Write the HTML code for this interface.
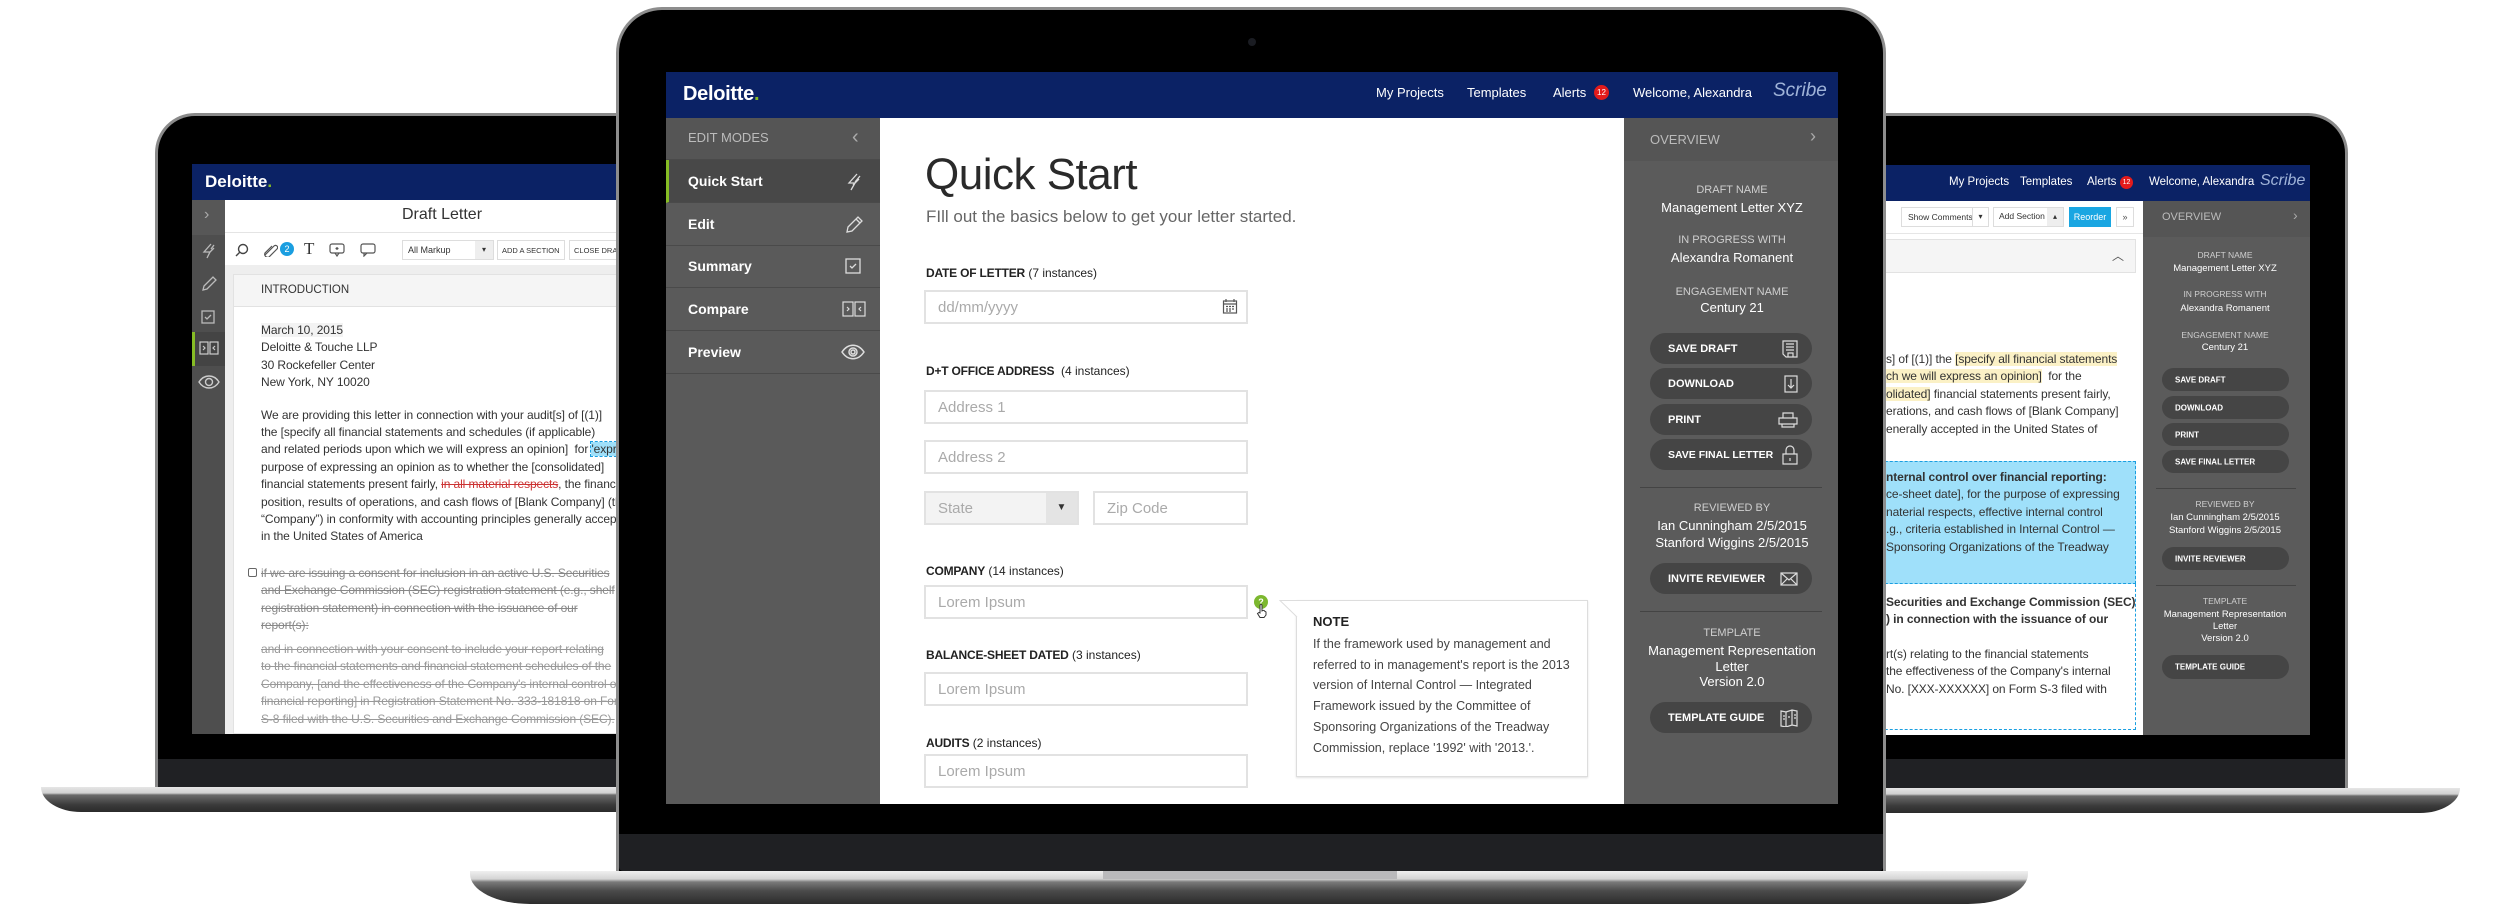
<!DOCTYPE html>
<html><head><meta charset="utf-8"><style>
*{margin:0;padding:0;box-sizing:border-box}
body{width:2500px;height:915px;background:#fff;position:relative;overflow:hidden;font-family:"Liberation Sans",sans-serif}
.a{position:absolute}
.navy{background:#0b2265}
.t{position:absolute;white-space:nowrap}
.lbl{font-size:11px;color:#cfcfcf;text-transform:uppercase;text-align:center;width:200px}
.val{font-size:13px;color:#fff;text-align:center;width:200px}
.btn{position:absolute;background:#454545;border-radius:16px;color:#fff;font-size:11px;font-weight:bold}
.btn span{position:absolute;left:18px;top:50%;transform:translateY(-50%)}
.btn svg{position:absolute;right:14px;top:50%;transform:translateY(-50%)}
.inp{position:absolute;border:2px solid #e2e2e2;background:#fff;font-size:15px;color:#aaa;padding-left:12px;display:flex;align-items:center}
.flab{position:absolute;font-size:12px;color:#222;white-space:nowrap}
.flab b{letter-spacing:-.2px}
.srow{position:absolute;left:666px;width:214px;height:43px;border-bottom:1px solid #4a4a4a;color:#fff;font-size:14px;font-weight:bold}
.srow span{position:absolute;left:22px;top:13px}
.srow svg{position:absolute;left:178px;top:12px}
.dl{font-size:12px;color:#333;line-height:17.4px;letter-spacing:-.1px}
</style></head><body>

<!-- LEFT LAPTOP -->
<div class="a" style="left:155px;top:113px;width:700px;height:674px;background:#000;border:3px solid #8a8a8a;border-bottom:none;border-radius:40px 40px 0 0"></div>
<div class="a" style="left:158px;top:759px;width:700px;height:28px;background:#202124"></div>
<div class="a" style="left:41px;top:787px;width:700px;height:25px;border-radius:0 0 0 40px/0 0 0 25px;background:linear-gradient(#e6e6e6 0,#d0d0d0 6px,#6a6a6a 8px,#3a3a3a 18px,#2a2a2a 25px)"></div>
<div class="a" style="left:192px;top:164px;width:500px;height:570px;background:#fff;overflow:hidden">
  <div class="a navy" style="left:0;top:0;width:500px;height:36px"></div>
  <div class="t" style="left:13px;top:8px;color:#fff;font-size:17px;font-weight:bold">Deloitte<span style="color:#86bc25">.</span></div>
  <div class="a" style="left:0;top:36px;width:33px;height:534px;background:#4e4e4e"></div>
  <div class="a" style="left:0;top:36px;width:33px;height:35px;background:#575757"></div>
  <div class="t" style="left:12px;top:42px;color:#aaa;font-size:16px">›</div>
  <svg class="a" style="left:8px;top:78px" width="18" height="18" viewBox="0 0 18 18" fill="none" stroke="#bbb" stroke-width="1.3"><path d="M11 2L4 10h6l-3 6M14 3l-3 4M9 11l5-5"/></svg>
  <svg class="a" style="left:8px;top:111px" width="18" height="18" viewBox="0 0 18 18" fill="none" stroke="#bbb" stroke-width="1.3"><path d="M3 15l1-4 9-9 3 3-9 9z"/></svg>
  <svg class="a" style="left:8px;top:145px" width="16" height="16" viewBox="0 0 16 16" fill="none" stroke="#bbb" stroke-width="1.3"><rect x="2" y="2" width="12" height="12"/><path d="M5 8l2 2 4-4"/></svg>
  <div class="a" style="left:0;top:168px;width:33px;height:34px;background:#444;border-left:3px solid #86bc25"></div>
  <svg class="a" style="left:7px;top:177px" width="20" height="14" viewBox="0 0 20 14" fill="none" stroke="#ccc" stroke-width="1.2"><rect x="1" y="1" width="8" height="12"/><rect x="11" y="1" width="8" height="12"/><path d="M4 5l2 2-2 2M16 5l-2 2 2 2"/></svg>
  <svg class="a" style="left:6px;top:211px" width="22" height="14" viewBox="0 0 22 14" fill="none" stroke="#ccc" stroke-width="1.4"><path d="M1 7c5-8 15-8 20 0-5 8-15 8-20 0z"/><circle cx="11" cy="7" r="3.5"/></svg>
  <div class="t" style="left:210px;top:42px;font-size:16px;color:#333">Draft Letter</div>
  <div class="a" style="left:33px;top:68px;width:470px;height:1px;background:#e4e4e4"></div>
  <svg class="a" style="left:43px;top:79px" width="14" height="14" viewBox="0 0 14 14" fill="none" stroke="#444" stroke-width="1.4"><circle cx="8" cy="6" r="4.5"/><path d="M5 9l-4 4"/></svg>
  <svg class="a" style="left:70px;top:79px" width="16" height="14" viewBox="0 0 16 14" fill="none" stroke="#555" stroke-width="1.2"><path d="M3 12l9-9a2 2 0 013 3l-8 8a3 3 0 01-4-4l7-7"/></svg>
  <div class="a" style="left:88px;top:78px;width:14px;height:14px;border-radius:7px;background:#1a9ee0;color:#fff;font-size:9px;text-align:center;line-height:14px">2</div>
  <div class="t" style="left:112px;top:75px;font-size:17px;color:#333;font-family:'Liberation Serif',serif">T</div>
  <svg class="a" style="left:137px;top:79px" width="16" height="14" viewBox="0 0 16 14" fill="none" stroke="#555" stroke-width="1.2"><rect x="1" y="1" width="14" height="9" rx="2"/><path d="M6 10l2 3 2-3M8 4v3M6.5 5.5h3"/></svg>
  <svg class="a" style="left:168px;top:79px" width="16" height="14" viewBox="0 0 16 14" fill="none" stroke="#555" stroke-width="1.2"><rect x="1" y="1" width="14" height="9" rx="2"/><path d="M4 10v3l3-3"/></svg>
  <div class="a" style="left:210px;top:76px;width:92px;height:20px;border:1px solid #ddd;font-size:9px;color:#333;padding:4px 0 0 5px">All Markup<span style="position:absolute;right:0;top:0;width:18px;height:18px;background:#eee;font-size:8px;text-align:center;line-height:18px">▾</span></div>
  <div class="a" style="left:305px;top:76px;width:68px;height:20px;border:1px solid #ddd;font-size:7.5px;color:#333;padding:5px 0 0 4px;white-space:nowrap">ADD A SECTION</div>
  <div class="a" style="left:377px;top:76px;width:68px;height:20px;border:1px solid #ddd;font-size:7.5px;color:#333;padding:5px 0 0 4px;white-space:nowrap">CLOSE DRAFT</div>
  <div class="a" style="left:33px;top:101px;width:470px;height:470px;background:#eee"></div>
  <div class="a" style="left:41px;top:110px;width:460px;height:460px;background:#fff;border:1px solid #e2e2e2"></div>
  <div class="a" style="left:41px;top:110px;width:460px;height:33px;background:#f5f5f5;border:1px solid #e2e2e2"></div>
  <div class="t" style="left:69px;top:120px;font-size:11.5px;color:#333">INTRODUCTION</div>
  <div class="a dl" style="left:69px;top:158px;white-space:nowrap">
    <span style="background:#f3f3f3">March 10, 2015</span><br>Deloitte &amp; Touche LLP<br>30 Rockefeller Center<br>New York, NY 10020<br><div style="height:15px"></div>
    We are providing this letter in connection with your audit[s] of [(1)]<br>the [specify all financial statements and schedules (if applicable)<br>and related periods upon which we will express an opinion]&nbsp; for <span style="background:#9fe0fa;outline:1px dashed #1a9ee0">'express</span><br>purpose of expressing an opinion as to whether the [consolidated]<br>financial statements present fairly, <s style="color:#c33">in all material respects</s>, the financial<br>position, results of operations, and cash flows of [Blank Company] (the<br>“Company”) in conformity with accounting principles generally accepted<br>in the United States of America
  </div>
  <div class="a" style="left:56px;top:404px;width:9px;height:9px;border:1px solid #666;border-radius:2px"></div>
  <div class="a dl" style="left:69px;top:401px;white-space:nowrap;color:#888"><s>if we are issuing a consent for inclusion in an active U.S. Securities</s><br><s>and Exchange Commission (SEC) registration statement (e.g., shelf</s><br><s>registration statement) in connection with the issuance of our</s><br><s>report(s):</s></div>
  <div class="a dl" style="left:69px;top:477px;white-space:nowrap;color:#999"><s>and in connection with your consent to include your report relating</s><br><s>to the financial statements and financial statement schedules of the</s><br><s>Company, [and the effectiveness of the Company's internal control over</s><br><s>financial reporting] in Registration Statement No. 333-181818 on Form</s><br><s>S-8 filed with the U.S. Securities and Exchange Commission (SEC).</s></div>
</div>

<!-- RIGHT LAPTOP -->
<div class="a" style="left:1700px;top:113px;width:648px;height:675px;background:#000;border:3px solid #8a8a8a;border-bottom:none;border-radius:40px 40px 0 0"></div>
<div class="a" style="left:1700px;top:759px;width:645px;height:29px;background:#202124"></div>
<div class="a" style="left:1800px;top:788px;width:660px;height:25px;border-radius:0 0 40px 0/0 0 25px 0;background:linear-gradient(#e6e6e6 0,#d0d0d0 6px,#6a6a6a 8px,#3a3a3a 18px,#2a2a2a 25px)"></div>
<div class="a" style="left:1760px;top:165px;width:550px;height:570px;background:#fff;overflow:hidden">
  <div class="a navy" style="left:0;top:0;width:550px;height:36px"></div>
  <div class="t" style="left:189px;top:11px;color:#fff;font-size:11.5px">My Projects</div>
  <div class="t" style="left:260px;top:11px;color:#fff;font-size:11.5px">Templates</div>
  <div class="t" style="left:327px;top:11px;color:#fff;font-size:11.5px">Alerts</div>
  <div class="a" style="left:360px;top:11px;width:13px;height:13px;border-radius:7px;background:#e31b1b;color:#fff;font-size:7px;text-align:center;line-height:13px">12</div>
  <div class="t" style="left:389px;top:11px;color:#fff;font-size:11.5px">Welcome, Alexandra</div>
  <div class="t" style="left:500px;top:7px;color:#9fb3d8;font-size:16px;font-style:italic">Scribe</div>
  <div class="a" style="left:141px;top:42px;width:88px;height:20px;border:1px solid #ddd;font-size:8.5px;color:#333;padding:4px 0 0 6px;white-space:nowrap">Show Comments<span style="position:absolute;right:0;top:0;width:16px;height:18px;border-left:1px solid #ddd;background:#fff;font-size:8px;text-align:center;line-height:18px">▾</span></div>
  <div class="a" style="left:233px;top:42px;width:71px;height:20px;border:1px solid #ddd;font-size:8.5px;color:#333;padding:3px 0 0 5px;white-space:nowrap">Add Section<span style="position:absolute;right:0;top:0;width:16px;height:18px;background:#eee;font-size:8px;text-align:center;line-height:18px">▴</span></div>
  <div class="a" style="left:309px;top:42px;width:42px;height:20px;background:#19a6e2;font-size:9px;color:#fff;text-align:center;line-height:20px">Reorder</div>
  <div class="a" style="left:356px;top:42px;width:18px;height:20px;border:1px solid #ddd;font-size:9px;color:#555;text-align:center;line-height:18px">»</div>
  <div class="a" style="left:0;top:68px;width:383px;height:1px;background:#e6e6e6"></div>
  <div class="a" style="left:0;top:74px;width:376px;height:34px;background:#f5f5f5;border:1px solid #e2e2e2"></div>
  <div class="t" style="left:352px;top:82px;font-size:12px;color:#555">︿</div>
  <div class="a dl" style="left:126px;top:186px;white-space:nowrap">s] of [(1)] the <span style="background:#fbf1c6">[specify all financial statements</span><br><span style="background:#fbf1c6">ch we will express an opinion]</span>&nbsp; for the<br><span style="background:#fbf1c6">olidated]</span> financial statements present fairly,<br>erations, and cash flows of [Blank Company]<br>enerally accepted in the United States of</div>
  <div class="a" style="left:100px;top:296px;width:276px;height:123px;background:#9fe0fa;border:1px dashed #1a9ee0"></div>
  <div class="a dl" style="left:126px;top:304px;white-space:nowrap"><b>nternal control over financial reporting:</b><br>ce-sheet date], for the purpose of expressing<br>naterial respects, effective internal control<br>.g., criteria established in Internal Control —<br>Sponsoring Organizations of the Treadway</div>
  <div class="a" style="left:100px;top:419px;width:276px;height:146px;border:1px dashed #1a9ee0;border-top:none"></div>
  <div class="a dl" style="left:126px;top:429px;white-space:nowrap"><b>Securities and Exchange Commission (SEC)</b><br><b>) in connection with the issuance of our</b></div>
  <div class="a dl" style="left:126px;top:481px;white-space:nowrap">rt(s) relating to the financial statements<br>the effectiveness of the Company's internal<br>No. [XXX-XXXXXX] on Form S-3 filed with</div>
  <div class="a" style="left:383px;top:36px;width:167px;height:534px;background:#5b5b5b"></div>
  <div class="a" style="left:383px;top:36px;width:167px;height:36px;background:#555"></div>
  <div class="t" style="left:402px;top:46px;color:#bbb;font-size:11px">OVERVIEW</div>
  <div class="t" style="left:533px;top:42px;color:#aaa;font-size:14px">›</div>
  <div class="t lbl" style="left:365px;top:85px;font-size:8.5px">Draft Name</div>
  <div class="t val" style="left:365px;top:98px;font-size:9.5px">Management Letter XYZ</div>
  <div class="t lbl" style="left:365px;top:124px;font-size:8.5px">In Progress With</div>
  <div class="t val" style="left:365px;top:138px;font-size:9.5px">Alexandra Romanent</div>
  <div class="t lbl" style="left:365px;top:165px;font-size:8.5px">Engagement Name</div>
  <div class="t val" style="left:365px;top:177px;font-size:9.5px">Century 21</div>
  <div class="btn" style="left:402px;top:203px;width:127px;height:23px;font-size:8px"><span style="left:13px">SAVE DRAFT</span></div>
  <div class="btn" style="left:402px;top:231px;width:127px;height:23px;font-size:8px"><span style="left:13px">DOWNLOAD</span></div>
  <div class="btn" style="left:402px;top:258px;width:127px;height:23px;font-size:8px"><span style="left:13px">PRINT</span></div>
  <div class="btn" style="left:402px;top:285px;width:127px;height:23px;font-size:8px"><span style="left:13px">SAVE FINAL LETTER</span></div>
  <div class="a" style="left:396px;top:323px;width:140px;height:1px;background:#444"></div>
  <div class="t lbl" style="left:365px;top:334px;font-size:8.5px">Reviewed By</div>
  <div class="t val" style="left:365px;top:347px;font-size:9.5px">Ian Cunningham 2/5/2015</div>
  <div class="t val" style="left:365px;top:360px;font-size:9.5px">Stanford Wiggins 2/5/2015</div>
  <div class="btn" style="left:402px;top:382px;width:127px;height:23px;font-size:8px"><span style="left:13px">INVITE REVIEWER</span></div>
  <div class="a" style="left:396px;top:420px;width:140px;height:1px;background:#444"></div>
  <div class="t lbl" style="left:365px;top:431px;font-size:8.5px">Template</div>
  <div class="t val" style="left:365px;top:444px;font-size:9.5px">Management Representation</div>
  <div class="t val" style="left:365px;top:456px;font-size:9.5px">Letter</div>
  <div class="t val" style="left:365px;top:468px;font-size:9.5px">Version 2.0</div>
  <div class="btn" style="left:402px;top:490px;width:127px;height:24px;font-size:8px"><span style="left:13px">TEMPLATE GUIDE</span></div>
</div>

<!-- CENTER LAPTOP -->
<div class="a" style="left:470px;top:871px;width:1558px;height:33px;border-radius:0 0 60px 60px/0 0 30px 30px;background:linear-gradient(#efefef 0,#d4d4d4 8px,#7a7a7a 11px,#4a4a4a 20px,#2c2c2c 33px)"></div>
<div class="a" style="left:1103px;top:871px;width:294px;height:8px;background:#b9b9bb"></div>
<div class="a" style="left:616px;top:7px;width:1270px;height:864px;background:#000;border:3px solid #8d8d8d;border-bottom:none;border-radius:46px 46px 0 0"></div>
<div class="a" style="left:619px;top:834px;width:1264px;height:37px;background:#1f2023;border-radius:0 0 4px 4px"></div>
<div class="a" style="left:1248px;top:38px;width:8px;height:8px;border-radius:4px;background:#1a1c22"></div>

<div class="a" style="left:666px;top:72px;width:1172px;height:732px;background:#fff;overflow:hidden">
  <div class="a navy" style="left:0;top:0;width:1172px;height:46px"></div>
</div>
<div class="t" style="left:683px;top:83px;color:#fff;font-size:20px;font-weight:bold;letter-spacing:-.3px">Deloitte<span style="color:#86bc25">.</span></div>
<div class="t" style="left:1376px;top:85px;color:#fff;font-size:13px">My Projects</div>
<div class="t" style="left:1467px;top:85px;color:#fff;font-size:13px">Templates</div>
<div class="t" style="left:1553px;top:85px;color:#fff;font-size:13px">Alerts</div>
<div class="a" style="left:1594px;top:85px;width:15px;height:15px;border-radius:8px;background:#e31b1b;color:#fff;font-size:8px;text-align:center;line-height:15px">12</div>
<div class="t" style="left:1633px;top:85px;color:#fff;font-size:13px">Welcome, Alexandra</div>
<div class="t" style="left:1773px;top:80px;color:#9fb3d8;font-size:19px;font-style:italic">Scribe</div>

<!-- sidebar -->
<div class="a" style="left:666px;top:118px;width:214px;height:686px;background:#5a5a5a"></div>
<div class="srow" style="top:118px;height:42px;background:#555"><span style="font-weight:normal;color:#bbb;font-size:13px;top:12px">EDIT MODES</span><span style="left:186px;top:8px;font-weight:normal;color:#aaa;font-size:20px">‹</span></div>
<div class="srow" style="top:160px;background:#484848;border-left:3px solid #86bc25"><span style="left:19px">Quick Start</span>
<svg style="left:176px" width="18" height="20" viewBox="0 0 18 20" fill="none" stroke="#ddd" stroke-width="1.3"><path d="M12 2L4 11h6l-4 7M15 4l-5 6M8 13l6-6"/></svg></div>
<div class="srow" style="top:203px"><span>Edit</span><svg width="20" height="20" viewBox="0 0 20 20" fill="none" stroke="#ddd" stroke-width="1.3"><path d="M3 17l1-5 10-10 4 4-10 10zM12 4l4 4"/></svg></div>
<div class="srow" style="top:245px"><span>Summary</span><svg width="18" height="18" viewBox="0 0 18 18" fill="none" stroke="#ddd" stroke-width="1.3"><rect x="2" y="2" width="14" height="14"/><path d="M6 9l2 2 4-4"/></svg></div>
<div class="srow" style="top:288px"><span>Compare</span><svg style="left:176px" width="24" height="18" viewBox="0 0 24 18" fill="none" stroke="#ddd" stroke-width="1.2"><rect x="1" y="2" width="10" height="14"/><rect x="13" y="2" width="10" height="14"/><path d="M5 7l2 2-2 2M19 7l-2 2 2 2"/></svg></div>
<div class="srow" style="top:331px"><span>Preview</span><svg style="left:175px;top:13px" width="24" height="16" viewBox="0 0 24 16" fill="none" stroke="#ddd" stroke-width="1.5"><path d="M1 8c6-9 16-9 22 0-6 9-16 9-22 0z"/><circle cx="12" cy="8" r="4"/><circle cx="12" cy="8" r="2"/></svg></div>

<!-- main -->
<div class="t" style="left:925px;top:150px;font-size:44px;color:#2a2a2a;letter-spacing:-.5px">Quick Start</div>
<div class="t" style="left:926px;top:207px;font-size:17px;color:#666">FIll out the basics below to get your letter started.</div>
<div class="flab" style="left:926px;top:266px"><b>DATE OF LETTER</b> (7 instances)</div>
<div class="inp" style="left:924px;top:290px;width:324px;height:34px">dd/mm/yyyy</div>
<svg class="a" style="left:1222px;top:298px" width="16" height="16" viewBox="0 0 16 16" fill="none" stroke="#555" stroke-width="1.2"><rect x="1.5" y="3" width="13" height="12"/><path d="M4 1v3M12 1v3M1.5 6h13M4 8.5h2M7 8.5h2M10 8.5h2M4 11h2M7 11h2M10 11h2M4 13h2M7 13h2"/></svg>
<div class="flab" style="left:926px;top:364px"><b>D+T OFFICE ADDRESS</b>&nbsp; (4 instances)</div>
<div class="inp" style="left:924px;top:390px;width:324px;height:34px">Address 1</div>
<div class="inp" style="left:924px;top:440px;width:324px;height:34px">Address 2</div>
<div class="inp" style="left:924px;top:491px;width:155px;height:34px;background:#f3f3f3">State</div>
<div class="a" style="left:1046px;top:493px;width:31px;height:30px;background:#e4e4e4;font-size:10px;color:#333;text-align:center;line-height:30px">▼</div>
<div class="inp" style="left:1093px;top:491px;width:155px;height:34px">Zip Code</div>
<div class="flab" style="left:926px;top:564px"><b>COMPANY</b> (14 instances)</div>
<div class="inp" style="left:924px;top:585px;width:324px;height:34px">Lorem Ipsum</div>
<div class="a" style="left:1254px;top:595px;width:14px;height:14px;border-radius:7px;background:#7cb82f;color:#fff;font-size:9px;font-weight:bold;text-align:center;line-height:14px">?</div>
<svg class="a" style="left:1256px;top:604px" width="12" height="14" viewBox="0 0 12 14" fill="#fff" stroke="#333" stroke-width="1"><path d="M4 1.5a1 1 0 012 0V7l1-.5a1 1 0 011.5.5l1.5 1v3l-2 2.5H4L1.5 9.5 3 8.5 4 9z"/></svg>
<div class="flab" style="left:926px;top:648px"><b>BALANCE-SHEET DATED</b> (3 instances)</div>
<div class="inp" style="left:924px;top:672px;width:324px;height:34px">Lorem Ipsum</div>
<div class="flab" style="left:926px;top:736px"><b>AUDITS</b> (2 instances)</div>
<div class="inp" style="left:924px;top:754px;width:324px;height:34px">Lorem Ipsum</div>

<div class="a" style="left:1296px;top:600px;width:292px;height:177px;background:#fff;border:1px solid #ddd;box-shadow:0 1px 2px rgba(0,0,0,.12)"></div>
<svg class="a" style="left:1279px;top:600px" width="20" height="18" viewBox="0 0 20 18"><path d="M18 0.5H1L18 17" fill="#fff" stroke="#ddd"/></svg>
<div class="t" style="left:1313px;top:614px;font-size:13px;font-weight:bold;color:#222">NOTE</div>
<div class="a" style="left:1313px;top:634px;font-size:12.5px;color:#444;line-height:20.7px;white-space:nowrap">If the framework used by management and<br>referred to in management's report is the 2013<br>version of Internal Control — Integrated<br>Framework issued by the Committee of<br>Sponsoring Organizations of the Treadway<br>Commission, replace '1992' with '2013.'.</div>

<!-- right panel -->
<div class="a" style="left:1624px;top:118px;width:214px;height:686px;background:#5b5b5b"></div>
<div class="a" style="left:1624px;top:118px;width:214px;height:43px;background:#555"></div>
<div class="t" style="left:1650px;top:132px;color:#bbb;font-size:13px">OVERVIEW</div>
<div class="t" style="left:1810px;top:126px;color:#aaa;font-size:18px">›</div>
<div class="t lbl" style="left:1632px;top:184px">Draft Name</div>
<div class="t val" style="left:1632px;top:200px">Management Letter XYZ</div>
<div class="t lbl" style="left:1632px;top:234px">In Progress With</div>
<div class="t val" style="left:1632px;top:250px">Alexandra Romanent</div>
<div class="t lbl" style="left:1632px;top:286px">Engagement Name</div>
<div class="t val" style="left:1632px;top:300px">Century 21</div>
<div class="btn" style="left:1650px;top:333px;width:162px;height:31px"><span>SAVE DRAFT</span><svg width="16" height="18" viewBox="0 0 16 18" fill="none" stroke="#ddd" stroke-width="1.2"><path d="M1 1h14v16H4L1 14z"/><path d="M4 4h8M4 7h8M4 10h8M6 17v-4h5v4"/></svg></div>
<div class="btn" style="left:1650px;top:368px;width:162px;height:31px"><span>DOWNLOAD</span><svg width="14" height="18" viewBox="0 0 14 18" fill="none" stroke="#ddd" stroke-width="1.2"><rect x="1" y="1" width="12" height="16"/><path d="M7 4v9M4 10l3 3 3-3"/></svg></div>
<div class="btn" style="left:1650px;top:404px;width:162px;height:31px"><span>PRINT</span><svg width="20" height="16" viewBox="0 0 20 16" fill="none" stroke="#ddd" stroke-width="1.2"><path d="M5 6V1h10v5M1 6h18v6H1zM4 12v3h12v-3"/></svg></div>
<div class="btn" style="left:1650px;top:439px;width:162px;height:31px"><span style="font-size:10.5px">SAVE FINAL LETTER</span><svg width="16" height="20" viewBox="0 0 16 20" fill="none" stroke="#ddd" stroke-width="1.2"><path d="M4 9V5a4 4 0 018 0v4M1 9h14v10H1zM8 13v3"/></svg></div>
<div class="a" style="left:1640px;top:487px;width:182px;height:1px;background:#444"></div>
<div class="t lbl" style="left:1632px;top:502px">Reviewed By</div>
<div class="t val" style="left:1632px;top:518px">Ian Cunningham 2/5/2015</div>
<div class="t val" style="left:1632px;top:535px">Stanford Wiggins 2/5/2015</div>
<div class="btn" style="left:1650px;top:563px;width:162px;height:31px"><span>INVITE REVIEWER</span><svg width="18" height="14" viewBox="0 0 18 14" fill="none" stroke="#ddd" stroke-width="1.2"><rect x="1" y="1" width="16" height="12"/><path d="M1 1l8 7 8-7M1 13l6-6M17 13l-6-6"/></svg></div>
<div class="a" style="left:1640px;top:611px;width:182px;height:1px;background:#444"></div>
<div class="t lbl" style="left:1632px;top:627px">Template</div>
<div class="t val" style="left:1632px;top:643px">Management Representation</div>
<div class="t val" style="left:1632px;top:659px">Letter</div>
<div class="t val" style="left:1632px;top:674px">Version 2.0</div>
<div class="btn" style="left:1650px;top:702px;width:162px;height:31px"><span>TEMPLATE GUIDE</span><svg width="18" height="18" viewBox="0 0 18 18" fill="none" stroke="#ddd" stroke-width="1.2"><path d="M1 2l5 1 6-2 5 1v15l-5-1-6 2-5-1zM6 3v15M12 1v15M3 7h2M3 10h2M14 6h2M14 9h2M8 8h2"/></svg></div>
</body></html>
